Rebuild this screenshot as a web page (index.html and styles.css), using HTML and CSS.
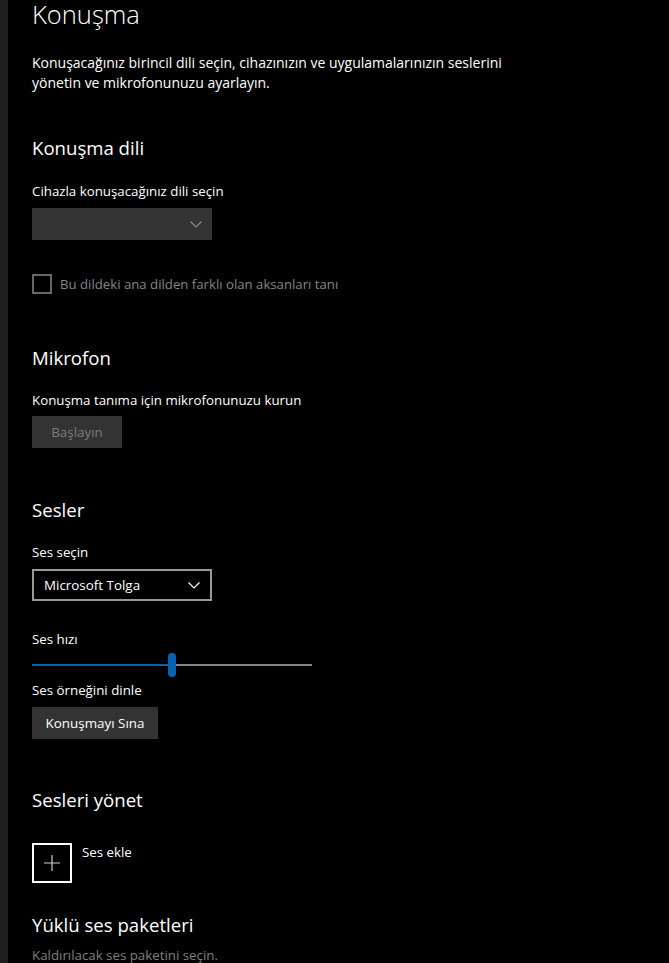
FILE: index.html
```html
<!DOCTYPE html>
<html lang="tr">
<head>
<meta charset="utf-8">
<title>Konuşma</title>
<link rel="stylesheet" href="styles.css">
</head>
<body>
<div class="rail"></div>
<main class="page">
  <h1 class="title">Konuşma</h1>
  <p class="desc">Konuşacağınız birincil dili seçin, cihazınızın ve uygulamalarınızın seslerini yönetin ve mikrofonunuzu ayarlayın.</p>

  <h2 class="heading h-lang">Konuşma dili</h2>
  <p class="label l-lang">Cihazla konuşacağınız dili seçin</p>
  <div class="combo combo-disabled">
    <svg class="chev" width="12" height="7" viewBox="0 0 12 7"><path d="M0.5 0.5 L6 6 L11.5 0.5" fill="none" stroke="#8a8a8a" stroke-width="1.2"/></svg>
  </div>
  <div class="check-row">
    <span class="checkbox"></span>
    <span class="check-label">Bu dildeki ana dilden farklı olan aksanları tanı</span>
  </div>

  <h2 class="heading h-mic">Mikrofon</h2>
  <p class="label l-mic">Konuşma tanıma için mikrofonunuzu kurun</p>
  <div class="btn btn-disabled b-start">Başlayın</div>

  <h2 class="heading h-voices">Sesler</h2>
  <p class="label l-voice">Ses seçin</p>
  <div class="combo combo-active">
    <span class="combo-text">Microsoft Tolga</span>
    <svg class="chev" width="12" height="7" viewBox="0 0 12 7"><path d="M0.5 0.5 L6 6 L11.5 0.5" fill="none" stroke="#ffffff" stroke-width="1.2"/></svg>
  </div>
  <p class="label l-speed">Ses hızı</p>
  <div class="slider">
    <div class="track"><div class="fill" style="width:50%"></div></div>
    <div class="thumb" style="left:136px"></div>
  </div>
  <p class="label l-sample">Ses örneğini dinle</p>
  <div class="btn b-test">Konuşmayı Sına</div>

  <h2 class="heading h-manage">Sesleri yönet</h2>
  <div class="add-row">
    <div class="add-box">
      <svg width="18" height="18" viewBox="0 0 18 18"><path d="M9 1 V17 M1 9 H17" stroke="#cfcfcf" stroke-width="1.2" fill="none"/></svg>
    </div>
    <span class="add-label">Ses ekle</span>
  </div>

  <h2 class="heading h-packs">Yüklü ses paketleri</h2>
  <p class="label dim l-packs">Kaldırılacak ses paketini seçin.</p>
</main>
</body>
</html>
```
FILE: styles.css
```css
html, body {
  margin: 0;
  padding: 0;
  background: #000;
  height: 100%;
  overflow: hidden;
}
body {
  display: flex;
  font-family: "Segoe UI", "Open Sans", "Noto Sans", sans-serif;
  color: #fff;
}
.rail {
  width: 8px;
  flex: 0 0 8px;
  background: #1f1f1f;
}
.page {
  flex: 1;
  padding-left: 24px;
}
.title {
  margin: 0;
  font-size: 25.5px;
  font-weight: 300;
  line-height: 28px;
}
.desc {
  margin: 25px 0 0;
  font-size: 14px;
  line-height: 20px;
  max-width: 490px;
}
.heading {
  margin: 0;
  font-size: 18.6px;
  font-weight: 400;
  line-height: 28px;
}
.label {
  margin: 0;
  font-size: 13.3px;
  line-height: 20px;
}
.dim { color: #7f7f7f; }
.h-lang { margin-top: 41px; }
.l-lang { margin-top: 19px; }
.combo {
  box-sizing: border-box;
  width: 180px;
  height: 32px;
  margin-top: 7px;
  display: flex;
  align-items: center;
  justify-content: space-between;
  padding: 0 10px;
}
.combo-disabled {
  background: #333;
  justify-content: flex-end;
}
.combo-active {
  border: 2px solid #999;
}
.combo-text {
  font-size: 13.4px;
}
.chev { display: block; }
.check-row {
  margin-top: 34px;
  display: flex;
  align-items: center;
  gap: 8px;
  height: 20px;
}
.checkbox {
  box-sizing: border-box;
  width: 20px;
  height: 20px;
  border: 2px solid #666;
}
.check-label {
  font-size: 13.2px;
  color: #858585;
  line-height: 20px;
}
.h-mic { margin-top: 50px; }
.l-mic { margin-top: 18px; }
.btn {
  display: flex;
  align-items: center;
  justify-content: center;
  box-sizing: border-box;
  height: 32px;
  background: #333;
  font-size: 13.4px;
  margin-top: 8px;
}
.b-start { width: 90px; color: #7a7a7a; margin-top: 6px; }
.h-voices { margin-top: 48px; }
.l-voice { margin-top: 18px; }
.l-speed { margin-top: 28px; }
.slider {
  position: relative;
  width: 280px;
  height: 24px;
  margin-top: 4px;
  display: flex;
  align-items: center;
}
.track {
  width: 100%;
  height: 2px;
  background: #858585;
}
.fill {
  height: 2px;
  background: #0063b1;
}
.thumb {
  position: absolute;
  top: 0;
  width: 8px;
  height: 24px;
  border-radius: 4px;
  background: #0063b1;
}
.l-sample { margin-top: 3px; }
.b-test { width: 126px; margin-top: 7px; }
.h-manage { margin-top: 47px; }
.add-row {
  margin-top: 29px;
  display: flex;
  align-items: flex-start;
  gap: 10px;
}
.add-box {
  box-sizing: border-box;
  width: 40px;
  height: 40px;
  border: 2px solid #fff;
  display: flex;
  align-items: center;
  justify-content: center;
}
.add-label {
  font-size: 13.3px;
  line-height: 20px;
  margin-top: -1px;
}
.h-packs { margin-top: 28px; }
.l-packs { margin-top: 6px; }
```
